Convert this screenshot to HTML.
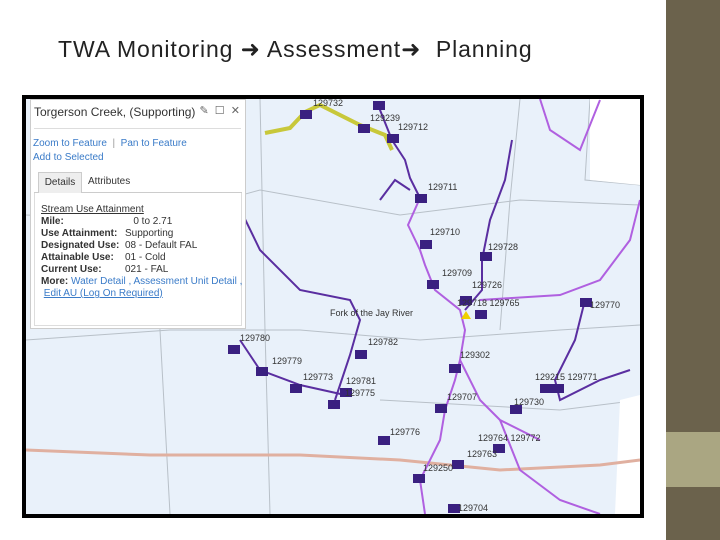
<!DOCTYPE html>
<html><head><meta charset="utf-8"><style>
body{margin:0;width:720px;height:540px;background:#fff;position:relative;overflow:hidden;font-family:"Liberation Sans",sans-serif}
.side{position:absolute;left:666px;top:0;width:54px;height:540px;background:#6b624c}
.band{position:absolute;left:666px;top:432px;width:54px;height:55px;background:#aaa682}
h1{position:absolute;left:58px;top:36px;margin:0;font-size:23px;font-weight:normal;color:#222;letter-spacing:0.9px;white-space:nowrap}
.map{position:absolute;left:22px;top:95px;width:614px;height:415px;border:4px solid #000;background:#e9f1fa;overflow:hidden}
.pop{position:absolute;left:4px;top:0;width:214px;height:228px;background:#fff;border:1px solid #ccc;font-size:10px;color:#333}
.pop .t{position:absolute;left:3px;top:5px;font-size:12px}
.pop .ic{position:absolute;right:5px;top:4px;font-size:11px;color:#666}
.pop .hr{position:absolute;left:3px;right:4px;top:28px;border-top:1px solid #ddd}
.a{color:#3a7bc8}
.l1{position:absolute;left:2px;top:38px}.l2{position:absolute;left:2px;top:52px}
.tabs{position:absolute;left:3px;top:72px;right:3px;height:20px;border-bottom:1px solid #ccc}
.tab1{position:absolute;left:4px;top:0;width:42px;height:20px;background:#eee;border:1px solid #ccc;border-bottom:none;line-height:20px;text-align:center}
.tab2{position:absolute;left:54px;top:4px}
.box{position:absolute;left:3px;right:3px;top:93px;height:132px;border:1px solid #ddd;border-top:none}
.d{position:absolute;left:10px;top:104px;line-height:12px;font-size:10px}
.d b{display:inline-block;width:84px}
</style></head><body>
<div class="side"></div><div class="band"></div>
<h1>TWA Monitoring &#10140; Assessment&#10140; &nbsp;Planning</h1>
<div class="map">
<svg width="614" height="415" viewBox="26 99 614 415" style="position:absolute;left:0;top:0">
<g fill="none" stroke="#b8c0c8" stroke-width="1">
<path d="M26 215 L150 220 L260 190 L400 215 L520 200 L640 205"/>
<path d="M26 340 L170 330 L300 330 L420 340 L560 330 L640 325"/>
<path d="M150 220 L160 330 L170 514"/><path d="M260 99 L265 330 L270 514"/>
<path d="M520 99 L510 200 L500 330"/><path d="M380 400 L560 410 L640 400"/>
<path d="M590 99 L585 180 L640 185"/><path d="M620 420 L630 514"/>
</g>
<path d="M590 99 L590 180 L640 185 L640 99Z" fill="#fff"/>
<path d="M620 400 L640 395 L640 514 L615 514Z" fill="#fff"/>
<path d="M26 450 L150 455 L300 455 L400 460 L500 470 L600 465 L640 460" stroke="#e0b0a0" stroke-width="3" fill="none"/>
<path d="M265 133 L290 128 L305 112 L320 105 L360 125 L385 135 L392 150" stroke="#c8c83a" stroke-width="4" fill="none"/>
<g fill="none" stroke="#5a2ea0" stroke-width="2">
<path d="M378 105 L392 140 L405 160 L410 178 L420 198"/>
<path d="M512 140 L505 180 L490 220 L482 260 L482 290 L465 310"/>
<path d="M226 180 L260 250 L300 290 L350 300 L360 320 L350 355 L335 400"/>
<path d="M240 340 L260 370 L300 385 L345 395"/>
<path d="M585 300 L575 340 L555 380 L560 400 L600 380 L630 370"/>
<path d="M380 200 L395 180 L410 190"/>
</g>
<g fill="none" stroke="#b060e0" stroke-width="2">
<path d="M420 198 L408 225 L420 250 L425 265 L435 290 L460 310 L465 330 L460 360 L455 380 L445 410 L440 440 L420 480 L425 514"/>
<path d="M640 200 L630 240 L600 280 L560 295 L480 300"/>
<path d="M500 420 L520 470 L560 500 L600 514"/>
<path d="M460 360 L480 400 L500 420 L540 440"/>
<path d="M540 99 L550 130 L580 150 L600 100"/>
</g>
<g fill="#3a2080">
<rect x="300" y="110" width="12" height="9"/><rect x="373" y="101" width="12" height="9"/><rect x="358" y="124" width="12" height="9"/>
<rect x="387" y="134" width="12" height="9"/><rect x="415" y="194" width="12" height="9"/><rect x="420" y="240" width="12" height="9"/>
<rect x="480" y="252" width="12" height="9"/><rect x="427" y="280" width="12" height="9"/><rect x="460" y="296" width="12" height="9"/>
<rect x="475" y="310" width="12" height="9"/><rect x="580" y="298" width="12" height="9"/><rect x="228" y="345" width="12" height="9"/>
<rect x="355" y="350" width="12" height="9"/><rect x="449" y="364" width="12" height="9"/><rect x="256" y="367" width="12" height="9"/>
<rect x="290" y="384" width="12" height="9"/><rect x="340" y="388" width="12" height="9"/><rect x="328" y="400" width="12" height="9"/>
<rect x="435" y="404" width="12" height="9"/><rect x="540" y="384" width="12" height="9"/><rect x="552" y="384" width="12" height="9"/>
<rect x="510" y="405" width="12" height="9"/><rect x="378" y="436" width="12" height="9"/><rect x="493" y="444" width="12" height="9"/>
<rect x="452" y="460" width="12" height="9"/><rect x="413" y="474" width="12" height="9"/><rect x="448" y="504" width="12" height="9"/>
</g>
<path d="M466 311 L471 319 L461 319Z" fill="#f0d000"/>
<g font-family="Liberation Sans" font-size="9" fill="#333">
<text x="313" y="106">129732</text><text x="370" y="121">129239</text><text x="398" y="130">129712</text>
<text x="428" y="190">129711</text><text x="430" y="235">129710</text><text x="488" y="250">129728</text>
<text x="442" y="276">129709</text><text x="472" y="288">129726</text><text x="457" y="306">129718 129765</text>
<text x="590" y="308">129770</text><text x="240" y="341">129780</text><text x="368" y="345">129782</text>
<text x="272" y="364">129779</text><text x="460" y="358">129302</text><text x="303" y="380">129773</text>
<text x="346" y="384">129781</text><text x="345" y="396">129775</text><text x="447" y="400">129707</text>
<text x="535" y="380">129215 129771</text><text x="514" y="405">129730</text><text x="390" y="435">129776</text>
<text x="478" y="441">129764 129772</text><text x="467" y="457">129763</text><text x="423" y="471">129250</text>
<text x="458" y="511">129704</text><text x="330" y="316">Fork of the Jay River</text>
</g>
</svg>
<div class="pop">
<div class="t">Torgerson Creek, (Supporting)</div>
<div class="ic">&#9998;&nbsp; &#9744;&nbsp; &#10005;</div>
<div class="hr"></div>
<div class="l1 a">Zoom to Feature &nbsp;<span style="color:#999">|</span>&nbsp; Pan to Feature</div>
<div class="l2 a">Add to Selected</div>
<div class="tabs"><div class="tab1">Details</div><div class="tab2">Attributes</div></div>
<div class="box"></div>
<div class="d"><u>Stream Use Attainment</u><br><b>Mile:</b>&nbsp;&nbsp; 0 to 2.71<br><b>Use Attainment:</b>Supporting<br><b>Designated Use:</b>08 - Default FAL<br><b>Attainable Use:</b>01 - Cold<br><b>Current Use:</b>021 - FAL<br><strong>More:</strong> <span class="a">Water Detail , Assessment Unit Detail ,</span><br>&nbsp;<u class="a">Edit AU (Log On Required)</u></div>
</div>
</div>
</body></html>
